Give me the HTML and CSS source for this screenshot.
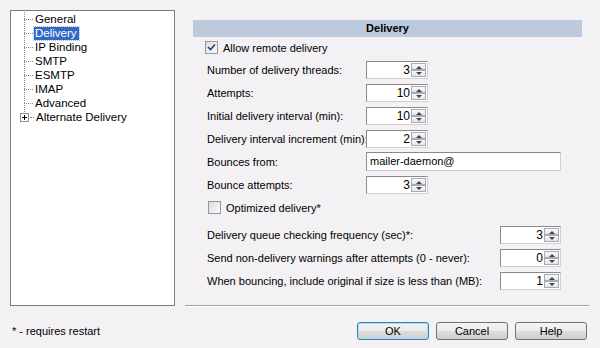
FILE: index.html
```html
<!DOCTYPE html>
<html lang="en">
<head>
    <meta charset="UTF-8">
    <title>Delivery</title>
    <link rel="stylesheet" href="styles.css">
</head>
<body>
    <div class="dialog">
        <ul class="tree">
            <li><span class="dots"></span><span class="node">General</span></li>
            <li><span class="dots"></span><span class="node selected">Delivery</span></li>
            <li><span class="dots"></span><span class="node">IP Binding</span></li>
            <li><span class="dots"></span><span class="node">SMTP</span></li>
            <li><span class="dots"></span><span class="node">ESMTP</span></li>
            <li><span class="dots"></span><span class="node">IMAP</span></li>
            <li><span class="dots"></span><span class="node">Advanced</span></li>
            <li class="last">
                <span class="expander">
                    <svg width="9" height="9" viewBox="0 0 9 9"><rect x="0.5" y="0.5" width="8" height="8" fill="#fff" stroke="#919191"/><path d="M2 4.5h5M4.5 2v5" stroke="#000"/></svg>
                </span><span class="dots short"></span><span class="node">Alternate Delivery</span>
            </li>
        </ul>

        <div class="settings">
            <div class="heading">Delivery</div>

            <label class="check-row">
                <span class="checkbox">
                    <svg width="9" height="9" viewBox="0 0 9 9"><path d="M1 4l2.5 2.5L8 1.5" fill="none" stroke="#1f3f8f" stroke-width="1.6"/></svg>
                </span>
                Allow remote delivery
            </label>

            <div class="row"><span class="label">Number of delivery threads:</span><span class="spin"><span class="value">3</span><span class="arrows"><i class="up"></i><i class="down"></i></span></span></div>
            <div class="row"><span class="label">Attempts:</span><span class="spin"><span class="value">10</span><span class="arrows"><i class="up"></i><i class="down"></i></span></span></div>
            <div class="row"><span class="label">Initial delivery interval (min):</span><span class="spin"><span class="value">10</span><span class="arrows"><i class="up"></i><i class="down"></i></span></span></div>
            <div class="row"><span class="label">Delivery interval increment (min):</span><span class="spin"><span class="value">2</span><span class="arrows"><i class="up"></i><i class="down"></i></span></span></div>
            <div class="row"><span class="label">Bounces from:</span><span class="textbox">mailer-daemon@</span></div>
            <div class="row"><span class="label">Bounce attempts:</span><span class="spin"><span class="value">3</span><span class="arrows"><i class="up"></i><i class="down"></i></span></span></div>

            <label class="check-row lower">
                <span class="checkbox"></span>
                Optimized delivery*
            </label>

            <div class="group">
                <div class="row wide"><span class="label">Delivery queue checking frequency (sec)*:</span><span class="spin"><span class="value">3</span><span class="arrows"><i class="up"></i><i class="down"></i></span></span></div>
                <div class="row wide"><span class="label">Send non-delivery warnings after attempts (0 - never):</span><span class="spin"><span class="value">0</span><span class="arrows"><i class="up"></i><i class="down"></i></span></span></div>
                <div class="row wide"><span class="label">When bouncing, include original if size is less than (MB):</span><span class="spin"><span class="value">1</span><span class="arrows"><i class="up"></i><i class="down"></i></span></span></div>
            </div>

            <div class="separator"></div>
        </div>

        <div class="note">* - requires restart</div>

        <div class="buttons">
            <button class="default">OK</button>
            <button>Cancel</button>
            <button>Help</button>
        </div>
    </div>
</body>
</html>
```

FILE: styles.css
```css
body {
    margin: 0;
    background: #f4f1f4;
    font-family: "Liberation Sans", Arial, sans-serif;
    font-size: 11px;
    color: #000;
}

.dialog {
    display: grid;
    grid-template-columns: 165px 404px;
    grid-template-rows: 297px auto;
    column-gap: 10px;
    padding: 10px 11px 0 10px;
}

/* tree on the left */
.tree {
    list-style: none;
    margin: 0;
    padding: 1px 0 0 0;
    background: #fff;
    border: 1px solid #7c7c7c;
    height: 296px;
    box-sizing: border-box;
    font-size: 11.5px;
}

.tree li {
    display: flex;
    align-items: center;
    height: 14px;
    padding-left: 13px;
    position: relative;
}

.tree li::before {
    content: "";
    position: absolute;
    left: 13px;
    top: -7px;
    height: 14px;
    border-left: 1px dotted #8a8a8a;
}

.tree li:first-child::before {
    top: 0;
    height: 7px;
}

.dots {
    width: 9px;
    border-top: 1px dotted #8a8a8a;
    margin-right: 1px;
}

.dots.short {
    width: 4px;
    margin-left: 1px;
}

.expander {
    display: flex;
    width: 9px;
    height: 9px;
    position: relative;
    z-index: 1;
}

.tree li.last {
    padding-left: 9px;
}

.tree li.last::before {
    left: 13px;
    top: -7px;
    height: 9px;
}

.node {
    padding: 0 2px 0 1px;
    line-height: 13px;
}

.node.selected {
    background: #3169c6;
    color: #fff;
    outline: 1px dotted #9bb4e0;
}

/* settings panel */
.settings {
    display: flex;
    flex-direction: column;
    padding-top: 10px;
}

.heading {
    margin: 0 7px 0 8px;
    height: 17px;
    line-height: 17px;
    background: #bccadc;
    text-align: center;
    font-weight: bold;
}

.check-row {
    display: flex;
    align-items: center;
    height: 21px;
    padding-left: 20px;
}

.check-row.lower {
    height: 23px;
    padding-left: 23px;
}

.checkbox {
    display: flex;
    align-items: center;
    justify-content: center;
    width: 11px;
    height: 11px;
    border: 1px solid #8d9aa8;
    background: linear-gradient(135deg, #dcdcd8, #fbfbfb);
    margin-right: 5px;
}

.row {
    display: flex;
    align-items: center;
    height: 23px;
    padding-left: 22px;
}

.label {
    width: 159px;
    flex-shrink: 0;
    white-space: nowrap;
}

.group {
    padding-top: 4px;
}

.row.wide .label {
    width: 293px;
}

.row.wide .spin {
    width: 61px;
}

.spin {
    display: flex;
    width: 62px;
    height: 18px;
    box-sizing: border-box;
    border: 1px solid #8a8a8a;
    border-right-color: #d0d0d0;
    border-bottom-color: #d0d0d0;
    background: #fff;
}

.value {
    flex: 1;
    text-align: right;
    line-height: 16px;
    padding-right: 1px;
    font-size: 12px;
}

.arrows {
    display: flex;
    flex-direction: column;
    width: 15px;
    padding: 1px 1px 1px 0;
}

.arrows i {
    flex: 1;
    position: relative;
    border: 1px solid #a5acb5;
    background: linear-gradient(#fbfbfb, #e4e4e4);
}

.arrows i::after {
    content: "";
    position: absolute;
    left: 4px;
    top: 2px;
    border-left: 3px solid transparent;
    border-right: 3px solid transparent;
}

.arrows i.up::after {
    border-bottom: 3px solid #444;
}

.arrows i.down::after {
    top: 1px;
    border-top: 3px solid #444;
}

.textbox {
    width: 195px;
    height: 19px;
    box-sizing: border-box;
    border: 1px solid #8a8a8a;
    border-right-color: #d0d0d0;
    border-bottom-color: #d0d0d0;
    background: #fff;
    padding-left: 3px;
    line-height: 17px;
}

.separator {
    margin-top: auto;
    border-top: 1px solid #a0a0a0;
    border-bottom: 1px solid #fff;
}

/* footer */
.note {
    padding: 18px 0 0 2px;
}

.buttons {
    display: flex;
    justify-content: flex-end;
    gap: 7px;
    padding: 15px 2px 0 0;
}

button {
    width: 72px;
    height: 18px;
    padding: 0;
    font-family: "Liberation Sans", Arial, sans-serif;
    font-size: 11px;
    border: 1px solid #707070;
    border-radius: 3px;
    background: linear-gradient(#f4f4f4 0%, #ebebeb 50%, #dddddd 51%, #cfcfcf 100%);
}

button.default {
    border-color: #3c7fb1;
    box-shadow: inset 0 0 0 1px #a6dff5;
}
```
